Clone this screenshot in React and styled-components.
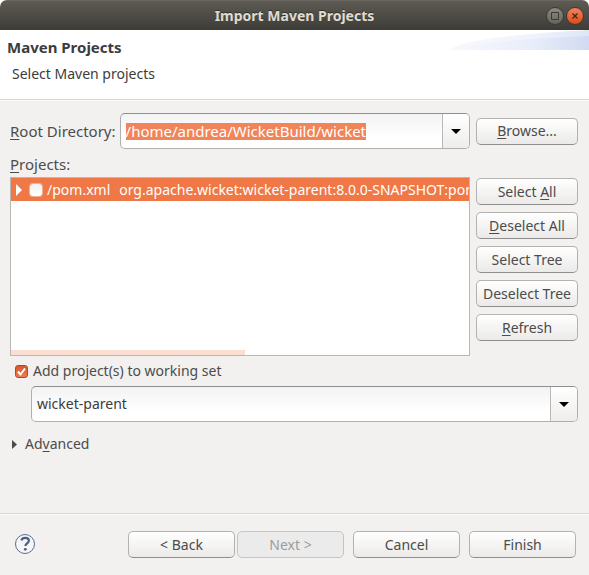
import React, { useEffect, useRef, useState } from "react";
import styled, { createGlobalStyle, css } from "styled-components";

const GlobalStyle = createGlobalStyle`
  *, *::before, *::after { box-sizing: border-box; }
  body { margin: 0; background: #fff; }
  body, button, input, select {
    font-family: "Noto Sans", "Open Sans", sans-serif;
    font-size: 14px;
    line-height: 20px;
    color: #4c4c4c;
  }
`;

const Dialog = styled.main`
  display: flex;
  flex-direction: column;
  min-height: 100vh;
  background: #f2f1f0;
  border-radius: 7px 7px 0 0;
  overflow: hidden;
`;

const TitleBar = styled.header`
  display: grid;
  grid-template-columns: 1fr auto 1fr;
  align-items: center;
  height: 30px;
  padding: 0 5px;
  background: linear-gradient(#5d5b53, #3d3c37);
  border-top: 1px solid #69675f;
`;

const WindowTitle = styled.h1`
  grid-column: 2;
  margin: 0;
  font-size: 14px;
  line-height: 20px;
  font-weight: 700;
  color: #dfdbd2;
  text-shadow: 0 -1px 0 #33322e;
`;

const WindowControls = styled.div`
  display: flex;
  justify-content: flex-end;
  gap: 2px;
`;

const WindowButton = styled.button`
  display: grid;
  place-items: center;
  width: 18px;
  height: 18px;
  padding: 0;
  border: 1px solid #3b3a36;
  border-radius: 50%;
  background: ${(p) =>
    p.$close ? "linear-gradient(#f5825c, #df4a16)" : "linear-gradient(#8c8a82, #65635c)"};
`;

const Banner = styled.section`
  display: flex;
  justify-content: space-between;
  height: 70px;
  background: #fff;
  border-bottom: 1px solid #d6d8d8;
  box-shadow: 0 1px 0 #fafafa;
`;

const BannerText = styled.div`
  padding: 7px 7px 0;
`;

const BannerTitle = styled.h2`
  margin: 0;
  font-size: 15px;
  line-height: 20px;
  font-weight: 700;
  color: #3c3c3c;
`;

const BannerMessage = styled.p`
  margin: 7px 5px 0;
  color: #3c3c3c;
`;

const Content = styled.form`
  flex: 1;
  display: flex;
  flex-direction: column;
  padding: 13px 11px 0 10px;
`;

const DirectoryRow = styled.div`
  display: grid;
  grid-template-columns: minmax(0, 1fr) 102px;
  align-items: center;
  gap: 6px;
`;

const DirectoryField = styled.div`
  display: grid;
  grid-template-columns: auto minmax(0, 1fr);
  align-items: center;
  gap: 4px;
`;

const FieldLabel = styled.label`
  font-size: 15px;
`;

const Mnemonic = styled.u`
  text-underline-offset: 2px;
  text-decoration-thickness: 1px;
`;

const Combo = styled.div`
  display: grid;
  grid-template-columns: minmax(0, 1fr) 27px;
  height: 36px;
  border: 1px solid #b1afac;
  border-top-color: #8f8f8f;
  border-radius: 5px;
  background: linear-gradient(#f3f3f3, #fff 70%);
  overflow: hidden;
`;

const comboText = css`
  grid-row: 1;
  min-width: 0;
  padding: 0 5px;
  border: 0;
  outline: 0;
  background: transparent;
  color: #3c3c3c;
`;

const ComboInput = styled.input`
  ${comboText}
  font-size: 15px;
  line-height: 17px;
  &::selection {
    background: rgba(240, 119, 70, 0.9);
    color: #fff;
  }
`;

const ComboSelect = styled.select`
  ${comboText}
  grid-column: 1 / -1;
  appearance: none;
`;

const arrowFace = css`
  grid-row: 1;
  grid-column: 2;
  display: grid;
  place-items: center;
  padding: 0;
  border: 0;
  border-left: 1px solid #b9b8b6;
  background: linear-gradient(#fff, #eeedeb);
`;

const ComboButton = styled.button`
  ${arrowFace}
`;

const ComboArrow = styled.span`
  ${arrowFace}
  pointer-events: none;
`;

const Button = styled.button`
  height: 27px;
  padding: 0 2px;
  border: 1px solid #b4b2af;
  border-bottom-color: #908e8c;
  border-radius: 5px;
  background: linear-gradient(#fff, #ebeae9);
  white-space: nowrap;
  &:disabled {
    border-color: #c6c5c4;
    background: #ebebeb;
    color: #9d9c9b;
  }
`;

const ProjectsLabel = styled.div`
  margin: 5px 0 3px;
  font-size: 15px;
`;

const ProjectsRow = styled.div`
  display: grid;
  grid-template-columns: minmax(0, 1fr) 102px;
  gap: 6px;
`;

const Tree = styled.div`
  display: flex;
  flex-direction: column;
  justify-content: space-between;
  height: 179px;
  border: 1px solid #b8b7b5;
  background: #fff;
  overflow: hidden;
`;

const TreeRow = styled.div`
  display: flex;
  align-items: center;
  height: 23px;
  padding-left: 5px;
  background: #f07746;
  color: #fff;
  white-space: nowrap;
`;

const Expander = styled.button`
  display: flex;
  flex: none;
  width: 14px;
  padding: 0;
  border: 0;
  background: transparent;
`;

const TreeCheck = styled.input`
  appearance: none;
  flex: none;
  width: 12px;
  height: 12px;
  margin: 0 5px 0 0;
  border-radius: 3px;
  background: linear-gradient(#f0f0f0, #fff);
  box-shadow: 0 0 0 1px #f5ad91;
`;

const TreeLabel = styled.label`
  display: flex;
  flex: none;
  gap: 9px;
`;

const ScrollTrack = styled.div`
  height: 5px;
`;

const ScrollThumb = styled.div`
  width: 51.2%;
  height: 5px;
  background: #fcddd1;
`;

const ButtonStack = styled.div`
  display: flex;
  flex-direction: column;
  gap: 7px;
  padding-top: 1px;
`;

const CheckLabel = styled.label`
  display: flex;
  align-items: center;
  gap: 5px;
  margin: 5px 0 5px 5px;
`;

const CheckBox = styled.span`
  display: grid;
  width: 13px;
  height: 13px;
  svg {
    grid-area: 1 / 1;
    pointer-events: none;
    visibility: hidden;
  }
  input:checked + svg {
    visibility: visible;
  }
`;

const CheckInput = styled.input`
  appearance: none;
  grid-area: 1 / 1;
  width: 13px;
  height: 13px;
  margin: 0;
  border: 1px solid #b04a22;
  border-radius: 3px;
  background: #fff;
  &:checked {
    background: linear-gradient(#d25a2c, #ee7d51);
  }
`;

const WorkingSet = styled.div`
  margin-left: 21px;
`;

const Advanced = styled.button`
  display: flex;
  align-items: center;
  align-self: flex-start;
  gap: 8px;
  margin-top: 12px;
  padding: 0 0 0 2px;
  border: 0;
  background: transparent;
`;

const Footer = styled.footer`
  display: flex;
  align-items: center;
  justify-content: space-between;
  height: 62px;
  padding: 0 13px 0 14px;
  border-top: 1px solid #d8d7d5;
  box-shadow: inset 0 1px 0 #fafafa;
`;

const HelpButton = styled.button`
  display: flex;
  padding: 0 0 1px;
  border: 0;
  background: transparent;
`;

const FooterButtons = styled.div`
  display: flex;
  gap: 9px;
`;

const WizardSteps = styled.div`
  display: flex;
  gap: 2px;
`;

const WizardButton = styled(Button)`
  width: 107px;
`;

const DownArrow = () => (
  <svg width="10" height="5" viewBox="0 0 10 5" aria-hidden="true">
    <path d="M0 0h10L5 5z" fill="#000" />
  </svg>
);

const RightArrow = ({ width, height, color }) => (
  <svg width={width} height={height} viewBox="0 0 6 12" preserveAspectRatio="none" aria-hidden="true">
    <path d="M0 0l6 6-6 6z" fill={color} />
  </svg>
);

const Swoosh = () => (
  <svg width="141" height="20" viewBox="0 0 141 20" aria-hidden="true">
    <defs>
      <linearGradient id="swooshBack">
        <stop offset="0" stopColor="#f8f9fd" />
        <stop offset="0.6" stopColor="#f0f3fb" />
        <stop offset="1" stopColor="#dde6f6" />
      </linearGradient>
      <linearGradient id="swooshFront">
        <stop offset="0" stopColor="#f8f9fd" />
        <stop offset="0.6" stopColor="#e8edf9" />
        <stop offset="1" stopColor="#d0daf3" />
      </linearGradient>
    </defs>
    <path d="M1 20C18 9 72 4 141 0v20z" fill="url(#swooshBack)" />
    <path d="M1 20C32 12 90 8 141 6v14z" fill="url(#swooshFront)" />
  </svg>
);

const HelpIcon = () => (
  <svg width="22" height="22" viewBox="0 0 22 22" fill="none" aria-hidden="true">
    <circle cx="11" cy="11" r="9.5" fill="#f5f6f8" stroke="#5b6d8f" />
    <path
      d="M7.3 7.4C7.8 5.6 9.2 4.8 11.2 4.8c2.2 0 3.7 1 3.7 2.8 0 2.9-3.5 2.8-3.5 5.4"
      stroke="#4c5e83"
      strokeWidth="2.2"
    />
    <circle cx="11.3" cy="16.3" r="1.4" fill="#4c5e83" />
  </svg>
);

export default function App() {
  const directory = useRef(null);
  const [workingSet, setWorkingSet] = useState(true);

  useEffect(() => {
    directory.current.focus();
    directory.current.select();
  }, []);

  return (
    <>
      <GlobalStyle />
      <Dialog>
        <TitleBar>
          <WindowTitle>Import Maven Projects</WindowTitle>
          <WindowControls>
            <WindowButton type="button" aria-label="Maximize">
              <svg width="8" height="8" viewBox="0 0 8 8" aria-hidden="true">
                <path d="M.5.5h7v7h-7z" fill="none" stroke="#3b3a36" />
              </svg>
            </WindowButton>
            <WindowButton type="button" aria-label="Close" $close>
              <svg width="6" height="6" viewBox="0 0 6 6" aria-hidden="true">
                <path d="M.5.5l5 5m0-5l-5 5" stroke="#3b2a22" strokeWidth="1.3" />
              </svg>
            </WindowButton>
          </WindowControls>
        </TitleBar>

        <Banner>
          <BannerText>
            <BannerTitle>Maven Projects</BannerTitle>
            <BannerMessage>Select Maven projects</BannerMessage>
          </BannerText>
          <Swoosh />
        </Banner>

        <Content onSubmit={(e) => e.preventDefault()}>
          <DirectoryRow>
            <DirectoryField>
              <FieldLabel htmlFor="directory">
                <Mnemonic>R</Mnemonic>oot Directory:
              </FieldLabel>
              <Combo>
                <ComboInput
                  id="directory"
                  ref={directory}
                  spellCheck={false}
                  defaultValue="/home/andrea/WicketBuild/wicket"
                />
                <ComboButton type="button" aria-label="Recent directories">
                  <DownArrow />
                </ComboButton>
              </Combo>
            </DirectoryField>
            <Button type="button">
              <Mnemonic>B</Mnemonic>rowse...
            </Button>
          </DirectoryRow>

          <ProjectsLabel id="projects">
            <Mnemonic>P</Mnemonic>rojects:
          </ProjectsLabel>
          <ProjectsRow>
            <Tree role="tree" aria-labelledby="projects">
              <TreeRow role="treeitem" aria-selected="true" aria-expanded="false">
                <Expander type="button" aria-label="Expand">
                  <RightArrow width={6} height={12} color="#fff" />
                </Expander>
                <TreeCheck type="checkbox" id="pom" />
                <TreeLabel htmlFor="pom">
                  <span>/pom.xml</span>
                  <span>org.apache.wicket:wicket-parent:8.0.0-SNAPSHOT:pom</span>
                </TreeLabel>
              </TreeRow>
              <ScrollTrack>
                <ScrollThumb />
              </ScrollTrack>
            </Tree>
            <ButtonStack>
              <Button type="button">
                Select <Mnemonic>A</Mnemonic>ll
              </Button>
              <Button type="button">
                <Mnemonic>D</Mnemonic>eselect All
              </Button>
              <Button type="button">Select Tree</Button>
              <Button type="button">Deselect Tree</Button>
              <Button type="button">
                <Mnemonic>R</Mnemonic>efresh
              </Button>
            </ButtonStack>
          </ProjectsRow>

          <CheckLabel>
            <CheckBox>
              <CheckInput
                type="checkbox"
                checked={workingSet}
                onChange={(e) => setWorkingSet(e.target.checked)}
              />
              <svg width="13" height="13" viewBox="0 0 13 13" aria-hidden="true">
                <path d="M3 6.5l2.5 3L10 3.5" fill="none" stroke="#fff" strokeWidth="2" />
              </svg>
            </CheckBox>
            Add project(s) to working set
          </CheckLabel>
          <WorkingSet>
            <Combo>
              <ComboSelect aria-label="Working set" disabled={!workingSet}>
                <option>wicket-parent</option>
              </ComboSelect>
              <ComboArrow>
                <DownArrow />
              </ComboArrow>
            </Combo>
          </WorkingSet>

          <Advanced type="button" aria-expanded="false">
            <RightArrow width={5} height={9} color="#4c4c4c" />
            <span>
              Ad<Mnemonic>v</Mnemonic>anced
            </span>
          </Advanced>
        </Content>

        <Footer>
          <HelpButton type="button" aria-label="Help">
            <HelpIcon />
          </HelpButton>
          <FooterButtons>
            <WizardSteps>
              <WizardButton type="button">&lt; Back</WizardButton>
              <WizardButton type="button" disabled>
                Next &gt;
              </WizardButton>
            </WizardSteps>
            <WizardButton type="button">Cancel</WizardButton>
            <WizardButton type="button">Finish</WizardButton>
          </FooterButtons>
        </Footer>
      </Dialog>
    </>
  );
}
